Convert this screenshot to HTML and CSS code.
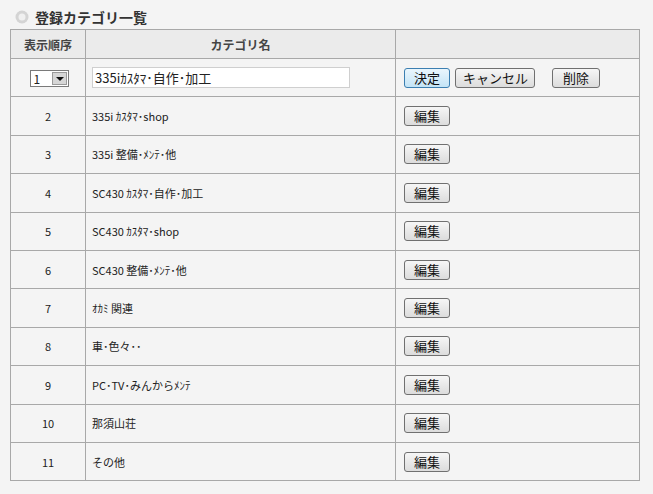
FILE: index.html
```html
<!DOCTYPE html>
<html lang="ja">
<head>
    <meta charset="UTF-8">
    <title>登録カテゴリ一覧</title>
    <link rel="stylesheet" href="styles.css">
</head>
<body>
    <div class="panel">
        <h2 class="title">
            <svg class="title-icon" width="14" height="14" viewBox="0 0 14 14">
                <circle cx="7" cy="7" r="6.5" fill="#d4d4d4"/>
                <circle cx="7" cy="7" r="3.5" fill="#f0f0f0"/>
            </svg>
            登録カテゴリ一覧
        </h2>

        <table class="cat-table">
            <thead>
                <tr>
                    <th class="col-order">表示順序</th>
                    <th class="col-name">カテゴリ名</th>
                    <th class="col-action"></th>
                </tr>
            </thead>
            <tbody>
                <tr>
                    <td class="num">
                        <span class="select"><span class="select-value">1</span><span class="select-arrow"></span></span>
                    </td>
                    <td class="name"><input class="name-input" type="text" value="335iｶｽﾀﾏ･自作･加工"></td>
                    <td class="actions">
                        <button class="btn btn-focus">決定</button>
                        <button class="btn btn-cancel">キャンセル</button>
                        <button class="btn btn-delete">削除</button>
                    </td>
                </tr>
                <tr><td class="num">2</td><td class="name">335i ｶｽﾀﾏ･shop</td><td class="actions"><button class="btn">編集</button></td></tr>
                <tr><td class="num">3</td><td class="name">335i 整備･ﾒﾝﾃ･他</td><td class="actions"><button class="btn">編集</button></td></tr>
                <tr><td class="num">4</td><td class="name">SC430 ｶｽﾀﾏ･自作･加工</td><td class="actions"><button class="btn">編集</button></td></tr>
                <tr><td class="num">5</td><td class="name">SC430 ｶｽﾀﾏ･shop</td><td class="actions"><button class="btn">編集</button></td></tr>
                <tr><td class="num">6</td><td class="name">SC430 整備･ﾒﾝﾃ･他</td><td class="actions"><button class="btn">編集</button></td></tr>
                <tr><td class="num">7</td><td class="name">ｵｶﾐ 関連</td><td class="actions"><button class="btn">編集</button></td></tr>
                <tr><td class="num">8</td><td class="name">車･色々･･</td><td class="actions"><button class="btn">編集</button></td></tr>
                <tr><td class="num">9</td><td class="name">PC･TV･みんからﾒﾝﾃ</td><td class="actions"><button class="btn">編集</button></td></tr>
                <tr><td class="num">10</td><td class="name">那須山荘</td><td class="actions"><button class="btn">編集</button></td></tr>
                <tr><td class="num">11</td><td class="name">その他</td><td class="actions"><button class="btn">編集</button></td></tr>
            </tbody>
        </table>
    </div>
</body>
</html>
```

FILE: styles.css
```css
* {
    margin: 0;
    padding: 0;
    box-sizing: border-box;
}

body {
    background: #f4f4f4;
    font-family: "Noto Sans CJK JP", "Noto Sans", sans-serif;
    font-size: 11px;
    color: #222;
}

.panel {
    padding: 6px 14px 0 10px;
}

.title {
    display: flex;
    align-items: center;
    gap: 6px;
    font-size: 14px;
    font-weight: bold;
    color: #333;
    height: 22px;
    padding-left: 5px;
    margin-bottom: 1px;
}

.title-icon {
    flex: none;
}

.cat-table {
    width: 630px;
    border-collapse: collapse;
    table-layout: fixed;
}

.cat-table th,
.cat-table td {
    border: 1px solid #a8a8a8;
}

.cat-table th {
    background: #ebebeb;
    height: 29px;
    font-size: 12px;
    font-weight: bold;
    color: #444;
    text-align: center;
}

.col-order { width: 75px; }
.col-name { width: 310px; }

.cat-table td {
    height: 38.4px;
    vertical-align: middle;
}

.num {
    text-align: center;
}

.name {
    padding-left: 6px;
}

.actions {
    padding-left: 8px;
    white-space: nowrap;
}

.select {
    display: inline-flex;
    align-items: center;
    width: 39px;
    height: 17px;
    background: #fff;
    border: 1px solid #7a7a7a;
    vertical-align: middle;
    margin-left: 2px;
}

.select-value {
    flex: 1;
    text-align: left;
    padding-left: 3px;
    font-size: 12px;
}

.select-arrow {
    width: 15px;
    height: 13px;
    margin-right: 1px;
    background: #d6d6d6;
    border: 1px solid #9a9a9a;
    position: relative;
}

.select-arrow::after {
    content: "";
    position: absolute;
    left: 3px;
    top: 4px;
    border-left: 4px solid transparent;
    border-right: 4px solid transparent;
    border-top: 4px solid #111;
}

.name-input {
    width: 258px;
    height: 21px;
    border: 1px solid #cfcfcf;
    background: #fff;
    font-family: inherit;
    font-size: 13px;
    padding: 0 2px;
    color: #222;
}

.btn {
    height: 20px;
    min-width: 46px;
    padding: 0 6px;
    border: 1px solid #707070;
    border-radius: 3px;
    background: linear-gradient(#f6f6f6, #dcdcdc);
    font-family: inherit;
    font-size: 13px;
    color: #111;
    vertical-align: middle;
    line-height: 18px;
    white-space: nowrap;
}

.btn-focus {
    border-color: #3c7fb1;
    background: linear-gradient(#eaf6fd, #c4e4f6);
}

.btn-cancel {
    width: 80px;
    margin-left: 3px;
    padding: 0 2px;
}

.btn-delete {
    width: 48px;
    margin-left: 14px;
}
```
